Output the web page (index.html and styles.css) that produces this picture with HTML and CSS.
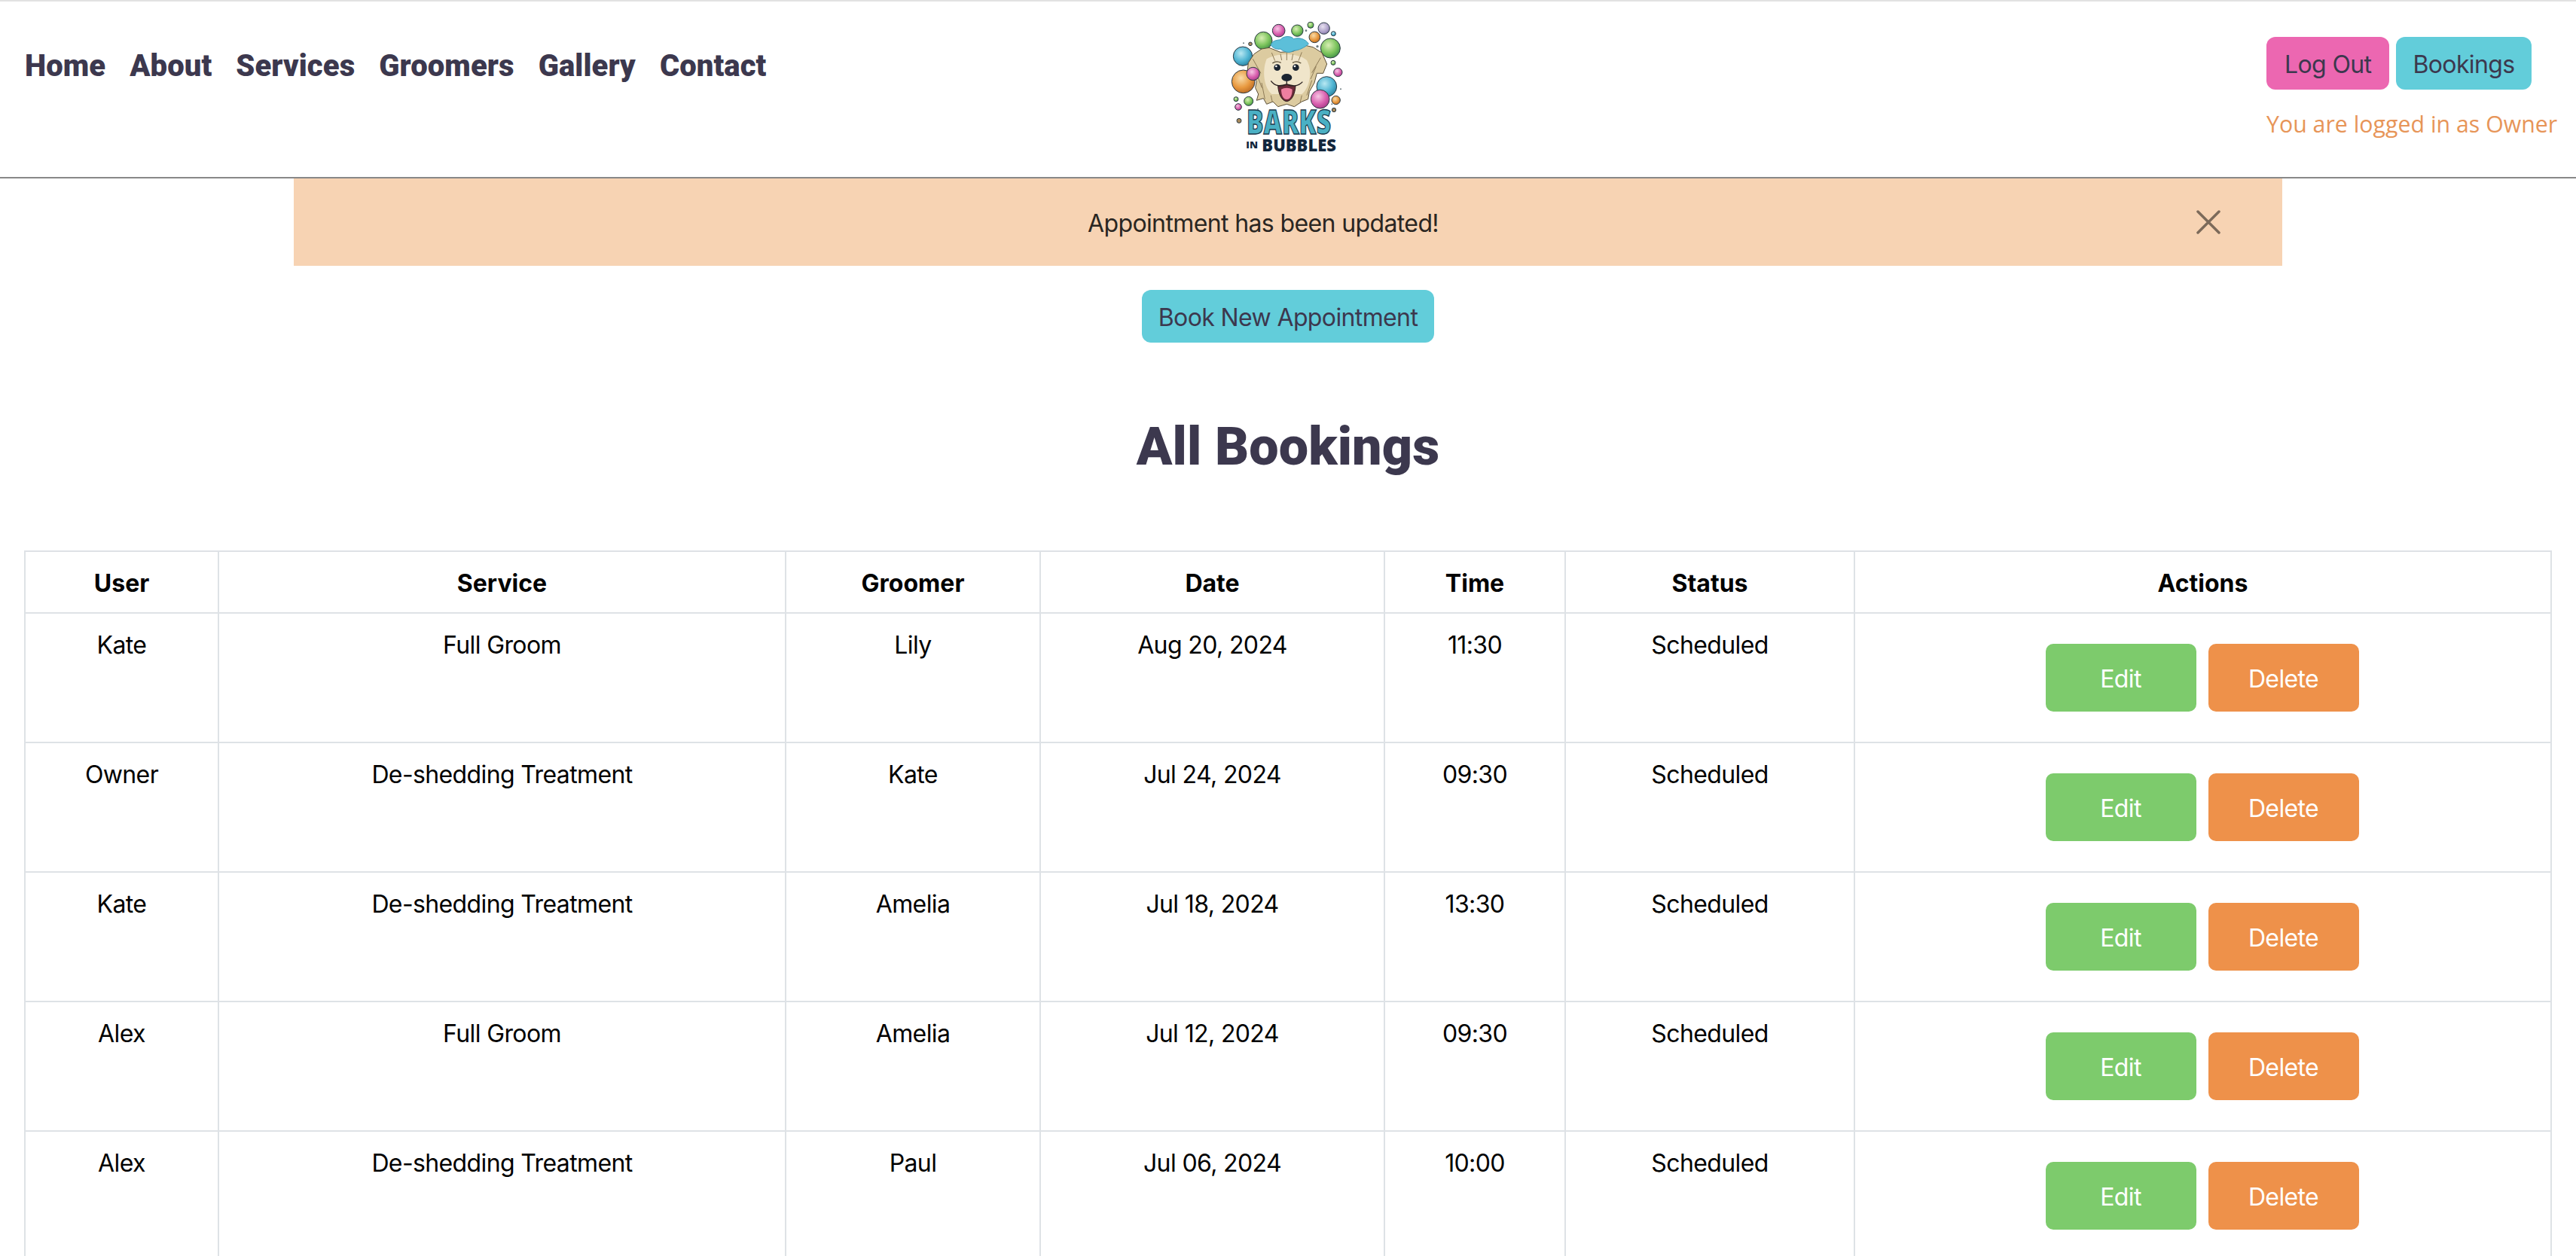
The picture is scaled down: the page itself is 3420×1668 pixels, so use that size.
FILE: index.html
```html
<!DOCTYPE html>
<html>
<head>
  <title>Barks in Bubbles - All Bookings</title>
  <link rel="stylesheet" href="styles.css">
</head>
<body>
  <header class="site-header">
    <nav class="nav-links">
      <a href="#">Home</a>
      <a href="#">About</a>
      <a href="#">Services</a>
      <a href="#">Groomers</a>
      <a href="#">Gallery</a>
      <a href="#">Contact</a>
    </nav>

    <a class="logo" href="#">
      <svg width="220" height="205" viewBox="0 0 660 615">
        <defs>
          <radialGradient id="bBlue" cx="40%" cy="35%" r="70%"><stop offset="0" stop-color="#b8e8f2"/><stop offset="0.6" stop-color="#4fb4d2"/><stop offset="1" stop-color="#2a7f9e"/></radialGradient>
          <radialGradient id="bGreen" cx="40%" cy="35%" r="70%"><stop offset="0" stop-color="#d8eeb4"/><stop offset="0.6" stop-color="#7cc45c"/><stop offset="1" stop-color="#3f8f46"/></radialGradient>
          <radialGradient id="bPink" cx="40%" cy="35%" r="70%"><stop offset="0" stop-color="#f6c6e4"/><stop offset="0.6" stop-color="#d95fae"/><stop offset="1" stop-color="#a83a88"/></radialGradient>
          <radialGradient id="bOrange" cx="40%" cy="35%" r="70%"><stop offset="0" stop-color="#f8dca8"/><stop offset="0.6" stop-color="#e8983e"/><stop offset="1" stop-color="#b96a24"/></radialGradient>
          <radialGradient id="bLav" cx="40%" cy="35%" r="70%"><stop offset="0" stop-color="#e8e2f0"/><stop offset="0.7" stop-color="#a99cc6"/><stop offset="1" stop-color="#7a6e9c"/></radialGradient>
        </defs>
        <g stroke="#2b3a44" stroke-width="3">
          <circle cx="293" cy="92" r="25" fill="url(#bPink)"/>
          <circle cx="367" cy="92" r="23" fill="url(#bGreen)"/>
          <circle cx="420" cy="70" r="12" fill="url(#bGreen)"/>
          <circle cx="473" cy="83" r="23" fill="url(#bLav)"/>
          <circle cx="436" cy="118" r="22" fill="url(#bOrange)"/>
          <circle cx="511" cy="104" r="9" fill="url(#bBlue)"/>
          <circle cx="232" cy="132" r="35" fill="url(#bGreen)"/>
          <circle cx="499" cy="162" r="39" fill="url(#bGreen)"/>
          <circle cx="150" cy="194" r="38" fill="url(#bBlue)"/>
          <circle cx="152" cy="295" r="46" fill="url(#bOrange)"/>
          <circle cx="529" cy="258" r="17" fill="url(#bPink)"/>
          <circle cx="510" cy="220" r="9" fill="url(#bGreen)"/>
          <circle cx="484" cy="315" r="40" fill="url(#bBlue)"/>
          <circle cx="521" cy="369" r="17" fill="url(#bOrange)"/>
          <circle cx="173" cy="373" r="18" fill="url(#bGreen)"/>
          <circle cx="123" cy="365" r="9" fill="url(#bGreen)"/>
          <circle cx="132" cy="396" r="13" fill="url(#bPink)"/>
          <circle cx="135" cy="451" r="9" fill="#a88a5c"/>
          <circle cx="513" cy="408" r="8" fill="#a88a5c"/>
          <circle cx="180" cy="145" r="7" fill="#a88a5c"/>
        </g>
        <g fill="#6b7a80">
          <circle cx="153" cy="142" r="3"/><circle cx="402" cy="92" r="4"/><circle cx="447" cy="155" r="5"/>
          <circle cx="540" cy="325" r="3"/><circle cx="505" cy="385" r="3"/><circle cx="210" cy="405" r="3"/>
        </g>
        <!-- ears and fur -->
        <path d="M255 160 L225 165 L195 185 L172 220 L168 255 L185 275 L205 292 L200 320 L212 345 L205 370 L232 362 L245 385 L270 375 L290 395 L325 385 L355 395 L385 375 L410 365 L415 335 L435 300 L445 262 L470 262 L485 225 L465 180 L430 158 L395 150 L350 175 L300 178 Z" fill="#dccba0" stroke="#5c5038" stroke-width="3" stroke-linejoin="round"/>
        <path d="M245 205 C285 180 370 180 405 210 C430 255 415 320 385 345 L265 345 C235 320 225 255 245 205 Z" fill="#f0e5ca"/>
        <path d="M190 205 L222 262 M200 250 L226 320 M225 300 L238 365 M262 350 L268 378 M385 350 L378 380 M425 290 L405 350 M460 200 L425 260 M442 235 L420 285 M265 180 L278 212 M385 178 L372 212 M325 180 L325 210 M300 185 L305 210 M350 185 L345 210" stroke="#8f7c58" stroke-width="3" fill="none"/>
        <!-- foam -->
        <path d="M262 150 C265 130 290 130 300 128 C310 112 345 112 352 125 C375 118 400 125 412 145 C395 160 375 170 352 172 C335 185 310 175 300 165 C285 168 270 162 262 150 Z" fill="#5cbfd9" stroke="#3b9ab8" stroke-width="3"/>
        <!-- face -->
        <path d="M268 222 q16 -12 34 -2 M348 220 q16 -10 34 2" stroke="#5c5038" stroke-width="4" fill="none"/>
        <circle cx="287" cy="239" r="13" fill="#1b2430"/>
        <circle cx="361" cy="239" r="13" fill="#1b2430"/>
        <circle cx="283" cy="234" r="4" fill="#fff"/>
        <circle cx="357" cy="234" r="4" fill="#fff"/>
        <ellipse cx="325" cy="279" rx="21" ry="15" fill="#1b2430"/>
        <path d="M325 294 V306 M262 292 C280 318 305 312 325 306 C345 312 368 318 388 296" stroke="#2b2020" stroke-width="4" fill="none"/>
        <path d="M290 312 C305 316 315 310 325 307 C335 310 345 316 360 312 C358 345 345 372 325 374 C305 372 292 345 290 312 Z" fill="#6a2a38" stroke="#2b2020" stroke-width="3"/>
        <path d="M303 326 C315 318 335 318 347 326 C347 350 338 366 325 366 C312 366 303 350 303 326 Z" fill="#ee7fa0"/>
        <circle cx="191" cy="264" r="26" fill="url(#bPink)" stroke="#2b3a44" stroke-width="3"/>
        <circle cx="458" cy="365" r="37" fill="url(#bPink)" stroke="#2b3a44" stroke-width="3"/>
        <!-- wordmark -->
        <text class="logo-barks" x="165" y="505" textLength="336" lengthAdjust="spacingAndGlyphs">BARKS</text>
        <text class="logo-in" x="163" y="560" textLength="47" lengthAdjust="spacingAndGlyphs">IN</text>
        <text class="logo-bubbles" x="226" y="572" textLength="296" lengthAdjust="spacingAndGlyphs">BUBBLES</text>
      </svg>
    </a>

    <div class="user-area">
      <div class="user-buttons">
        <a class="btn btn-pink" href="#">Log Out</a>
        <a class="btn btn-teal btn-bookings" href="#">Bookings</a>
      </div>
      <p class="user-note">You are logged in as Owner</p>
    </div>
  </header>

  <main>
    <div class="alert">
      Appointment has been updated!
      <button class="alert-close" type="button" aria-label="Close">
        <svg width="32" height="32" viewBox="0 0 32 32"><path d="M2 2 L30 30 M30 2 L2 30"/></svg>
      </button>
    </div>

    <div class="book-row">
      <a class="btn btn-teal btn-book" href="#">Book New Appointment</a>
    </div>

    <h1 class="page-title">All Bookings</h1>

    <table class="bookings">
      <colgroup>
        <col class="col-user">
        <col class="col-service">
        <col class="col-groomer">
        <col class="col-date">
        <col class="col-time">
        <col class="col-status">
        <col class="col-actions">
      </colgroup>
      <thead>
        <tr>
          <th>User</th>
          <th>Service</th>
          <th>Groomer</th>
          <th>Date</th>
          <th>Time</th>
          <th>Status</th>
          <th>Actions</th>
        </tr>
      </thead>
      <tbody>
        <tr>
          <td>Kate</td>
          <td>Full Groom</td>
          <td>Lily</td>
          <td>Aug 20, 2024</td>
          <td>11:30</td>
          <td>Scheduled</td>
          <td class="actions-cell"><div class="actions"><a class="btn-action btn-edit" href="#">Edit</a><a class="btn-action btn-delete" href="#">Delete</a></div></td>
        </tr>
        <tr>
          <td>Owner</td>
          <td>De-shedding Treatment</td>
          <td>Kate</td>
          <td>Jul 24, 2024</td>
          <td>09:30</td>
          <td>Scheduled</td>
          <td class="actions-cell"><div class="actions"><a class="btn-action btn-edit" href="#">Edit</a><a class="btn-action btn-delete" href="#">Delete</a></div></td>
        </tr>
        <tr>
          <td>Kate</td>
          <td>De-shedding Treatment</td>
          <td>Amelia</td>
          <td>Jul 18, 2024</td>
          <td>13:30</td>
          <td>Scheduled</td>
          <td class="actions-cell"><div class="actions"><a class="btn-action btn-edit" href="#">Edit</a><a class="btn-action btn-delete" href="#">Delete</a></div></td>
        </tr>
        <tr>
          <td>Alex</td>
          <td>Full Groom</td>
          <td>Amelia</td>
          <td>Jul 12, 2024</td>
          <td>09:30</td>
          <td>Scheduled</td>
          <td class="actions-cell"><div class="actions"><a class="btn-action btn-edit" href="#">Edit</a><a class="btn-action btn-delete" href="#">Delete</a></div></td>
        </tr>
        <tr>
          <td>Alex</td>
          <td>De-shedding Treatment</td>
          <td>Paul</td>
          <td>Jul 06, 2024</td>
          <td>10:00</td>
          <td>Scheduled</td>
          <td class="actions-cell"><div class="actions"><a class="btn-action btn-edit" href="#">Edit</a><a class="btn-action btn-delete" href="#">Delete</a></div></td>
        </tr>
      </tbody>
    </table>
  </main>
</body>
</html>
```

FILE: styles.css
```css
html, body {
  height: 100%;
  overflow: hidden;
}
body {
  margin: 0;
  background: #fff;
  color: #000;
  font-family: Inter, "Liberation Sans", sans-serif;
  font-size: 32px;
  line-height: 48px;
  letter-spacing: -0.62px;
}
a {
  text-decoration: none;
}

/* header */
.site-header {
  display: flex;
  box-sizing: border-box;
  height: 237px;
  border-top: 2px solid #e2e2e2;
  border-bottom: 2px solid #888;
  padding: 0 26px 0 33px;
}
.nav-links {
  flex: 1 1 0;
  display: flex;
  gap: 32px;
  padding-top: 62px;
  font-family: Roboto, sans-serif;
  font-size: 40px;
  font-weight: 900;
  letter-spacing: 0.1px;
}
.nav-links a {
  color: #3c384e;
}
.logo {
  display: block;
  height: 205px;
  margin-top: 8px;
  margin-right: 7px;
}
.logo text {
  letter-spacing: 0;
}
.logo-barks {
  font-family: "Open Sans", sans-serif;
  font-size: 132px;
  font-weight: 800;
  fill: #4ab0c4;
  stroke: #1d3a4c;
  stroke-width: 4px;
}
.logo-in {
  font-family: "Open Sans", sans-serif;
  font-size: 36px;
  font-weight: 800;
  fill: #12263c;
}
.logo-bubbles {
  font-family: "Open Sans", sans-serif;
  font-size: 66px;
  font-weight: 800;
  fill: #12263c;
}
.user-area {
  flex: 1 1 0;
  display: flex;
  flex-direction: column;
  align-items: flex-end;
  padding-top: 47px;
}
.user-buttons {
  display: flex;
  gap: 9px;
  width: 385px;
}
.user-note {
  width: 385px;
  margin: 22px 0 0;
  font-family: "Open Sans", sans-serif;
  font-size: 30.3px;
  letter-spacing: 0;
  color: #e79558;
  white-space: nowrap;
}

/* buttons */
.btn {
  display: inline-block;
  padding: 13px 24px 9px;
  border-radius: 12px;
  color: #3c384e;
}
.btn-pink {
  background: #ec67b1;
}
.btn-teal {
  background: #62cdda;
}
.btn-bookings {
  padding: 13px 22px 9px;
}
.btn-book {
  padding: 13px 22px 9px;
}

/* alert */
.alert {
  position: relative;
  box-sizing: border-box;
  width: 2640px;
  margin: 0 auto;
  padding: 36px 98px 32px 32px;
  background: #f7d3b3;
  color: #2a2622;
  text-align: center;
}
.alert-close {
  position: absolute;
  top: 42px;
  right: 82px;
  width: 32px;
  height: 32px;
  padding: 0;
  border: none;
  background: none;
}
.alert-close svg {
  display: block;
}
.alert-close path {
  fill: none;
  stroke: #7c6a5a;
  stroke-width: 3.5;
  stroke-linecap: round;
}

.book-row {
  margin-top: 32px;
  text-align: center;
}
.page-title {
  margin: 96px 0;
  font-family: Roboto, sans-serif;
  font-size: 70px;
  font-weight: 900;
  line-height: 84px;
  letter-spacing: 0.15px;
  color: #3c384e;
  text-align: center;
}

/* table */
.bookings {
  width: 3354px;
  margin-left: 32px;
  border-collapse: collapse;
  table-layout: fixed;
  text-align: center;
}
.bookings th,
.bookings td {
  padding: 18px 16px 14px;
  border: 2px solid #dee2e6;
  vertical-align: top;
}
.bookings th {
  letter-spacing: 0;
}
.bookings td.actions-cell {
  padding: 16px;
}
.col-user { width: 257px; }
.col-service { width: 753px; }
.col-groomer { width: 338px; }
.col-date { width: 457px; }
.col-time { width: 240px; }
.col-status { width: 384px; }
.col-actions { width: 925px; }
.actions {
  display: flex;
  justify-content: center;
  gap: 16px;
  padding: 24px 2px 24px 0;
}
.btn-action {
  width: 200px;
  height: 90px;
  border-radius: 10px;
  color: #fff;
  line-height: 94px;
}
.btn-edit {
  background: #7dcb6c;
}
.btn-delete {
  background: #ee914a;
}
```
